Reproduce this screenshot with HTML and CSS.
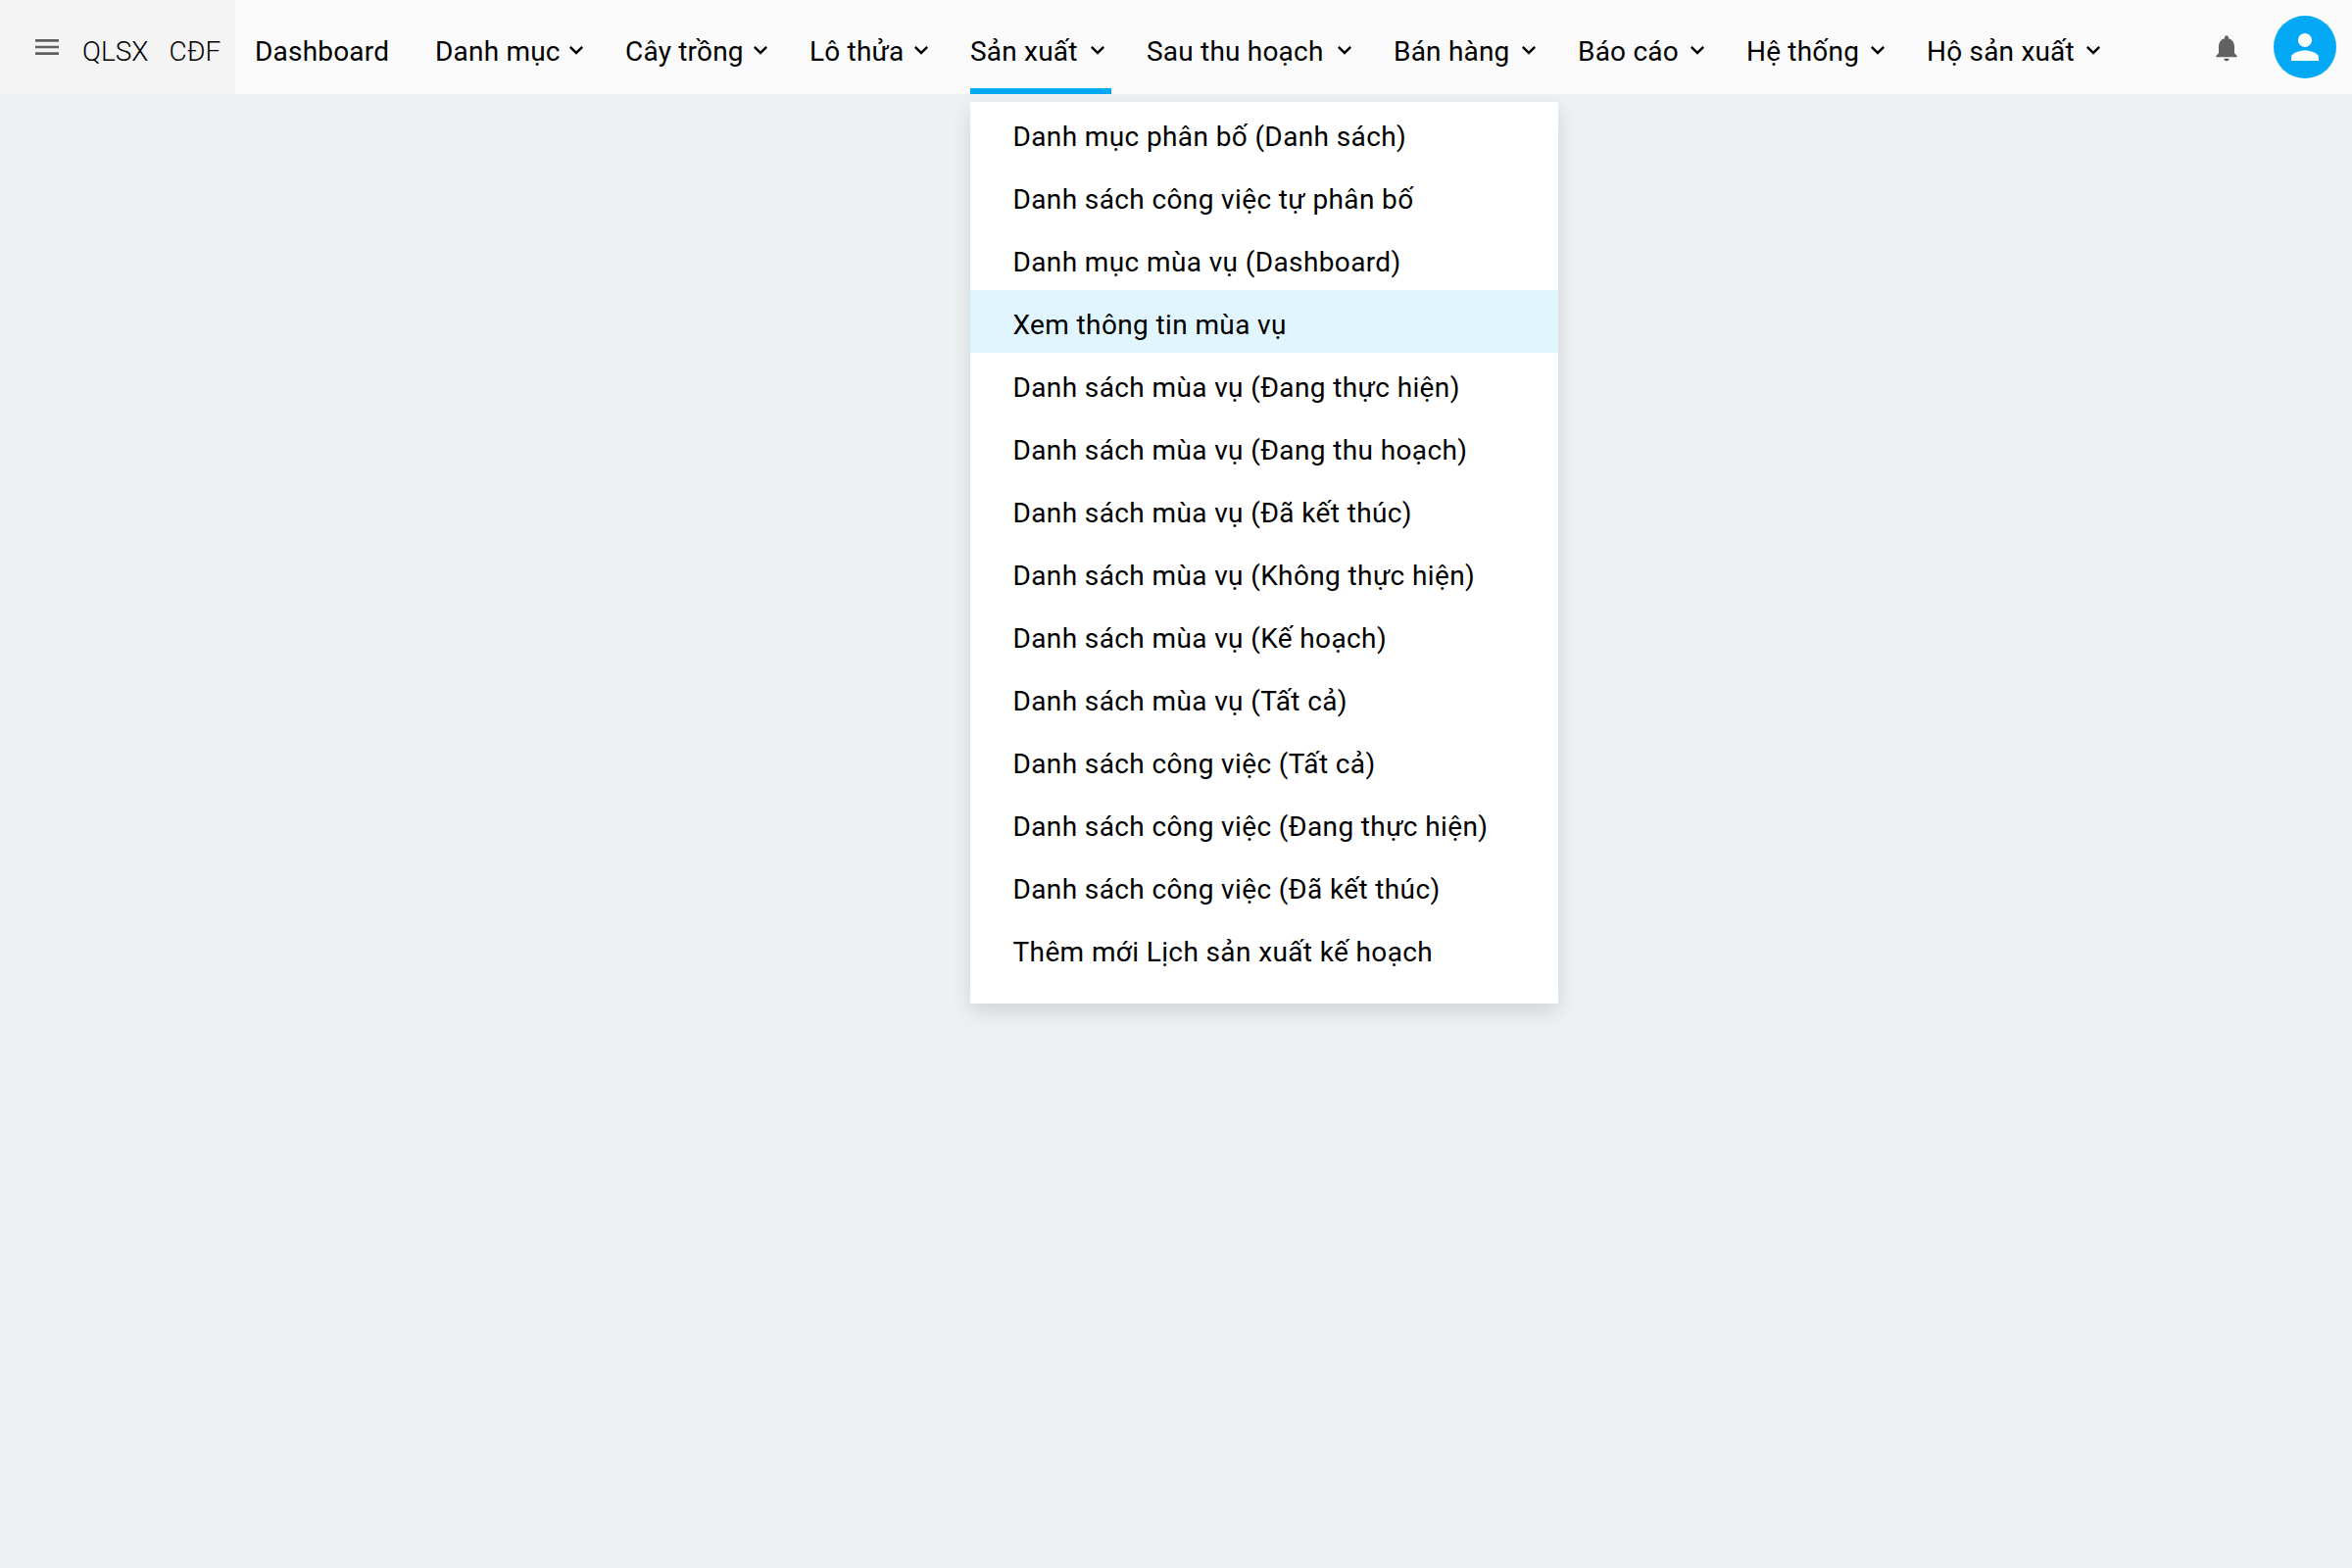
FILE: index.html
```html
<!DOCTYPE html>
<html lang="vi">
<head>
<meta charset="utf-8">
<title>QLSX CĐF</title>
<link rel="stylesheet" href="styles.css">
</head>
<body>
<svg class="sprite" width="0" height="0">
  <symbol id="chevron" viewBox="0 0 24 24"><path d="M7.41 8.59 12 13.17l4.59-4.58L18 10l-6 6-6-6z"/></symbol>
</svg>
<header class="topbar">
  <div class="brand">
    <svg class="menu-icon" viewBox="0 0 24 24"><path d="M3 18h18v-2H3v2zm0-5h18v-2H3v2zm0-7v2h18V6H3z"/></svg>
    <span class="brand-name">QLSX</span>
    <span class="brand-name">CĐF</span>
  </div>
  <nav class="nav">
    <a class="nav-item nav-home">Dashboard</a>
    <a class="nav-item nav-catalog">Danh mục<svg class="chevron"><use href="#chevron"/></svg></a>
    <a class="nav-item nav-crops">Cây trồng<svg class="chevron"><use href="#chevron"/></svg></a>
    <a class="nav-item nav-plots">Lô thửa<svg class="chevron"><use href="#chevron"/></svg></a>
    <div class="nav-item nav-production active">Sản xuất<svg class="chevron"><use href="#chevron"/></svg>
      <ul class="dropdown">
        <li class="option">Danh mục phân bố (Danh sách)</li>
        <li class="option">Danh sách công việc tự phân bố</li>
        <li class="option">Danh mục mùa vụ (Dashboard)</li>
        <li class="option hovered">Xem thông tin mùa vụ</li>
        <li class="option">Danh sách mùa vụ (Đang thực hiện)</li>
        <li class="option">Danh sách mùa vụ (Đang thu hoạch)</li>
        <li class="option">Danh sách mùa vụ (Đã kết thúc)</li>
        <li class="option">Danh sách mùa vụ (Không thực hiện)</li>
        <li class="option">Danh sách mùa vụ (Kế hoạch)</li>
        <li class="option">Danh sách mùa vụ (Tất cả)</li>
        <li class="option">Danh sách công việc (Tất cả)</li>
        <li class="option">Danh sách công việc (Đang thực hiện)</li>
        <li class="option">Danh sách công việc (Đã kết thúc)</li>
        <li class="option">Thêm mới Lịch sản xuất kế hoạch</li>
      </ul>
    </div>
    <a class="nav-item nav-harvest">Sau thu hoạch<svg class="chevron"><use href="#chevron"/></svg></a>
    <a class="nav-item nav-sales">Bán hàng<svg class="chevron"><use href="#chevron"/></svg></a>
    <a class="nav-item nav-reports">Báo cáo<svg class="chevron"><use href="#chevron"/></svg></a>
    <a class="nav-item nav-system">Hệ thống<svg class="chevron"><use href="#chevron"/></svg></a>
    <a class="nav-item nav-farms">Hộ sản xuất<svg class="chevron"><use href="#chevron"/></svg></a>
  </nav>
  <div class="actions">
    <svg class="bell" viewBox="0 0 24 24"><path d="M12 22c1.1 0 2-.9 2-2h-4c0 1.1.89 2 2 2zm6-6v-5c0-3.07-1.64-5.64-4.5-6.32V4c0-.83-.67-1.5-1.5-1.5s-1.5.67-1.5 1.5v.68C7.63 5.36 6 7.92 6 11v5l-2 2v1h16v-1l-2-2z"/></svg>
    <span class="avatar"><svg class="person" viewBox="0 0 24 24"><path d="M12 12c2.21 0 4-1.79 4-4s-1.79-4-4-4-4 1.79-4 4 1.79 4 4 4zm0 2c-2.67 0-8 1.34-8 4v2h16v-2c0-2.66-5.33-4-8-4z"/></svg></span>
  </div>
</header>
</body>
</html>
```
FILE: styles.css
```css
* {
  box-sizing: border-box;
}

body {
  margin: 0;
  min-height: 1600px;
  background: #edf1f4;
  color: #000;
  font-family: Roboto, "Noto Sans", sans-serif;
  font-size: 28px;
}

.sprite {
  display: block;
}

.topbar {
  display: flex;
  height: 96px;
  background: #fafafa;
}

.brand {
  display: flex;
  flex: none;
  align-items: center;
  width: 240px;
  padding-left: 32px;
  background: #f4f4f4;
}

.menu-icon {
  flex: none;
  width: 32px;
  height: 32px;
  margin-right: 20px;
  fill: #616161;
}

.brand-name {
  flex: none;
  padding-top: 9px;
  margin-right: 21px;
  font-weight: 300;
  white-space: nowrap;
}

.nav {
  display: flex;
  flex: none;
  gap: 36px;
  padding-left: 20px;
}

.nav-item {
  position: relative;
  display: flex;
  align-items: center;
  justify-content: space-between;
  padding-top: 9px;
  letter-spacing: 0.2px;
  white-space: nowrap;
}

.nav-home { width: 148px; }
.nav-catalog { width: 158px; }
.nav-crops { width: 152px; }
.nav-plots { width: 128px; }
.nav-production { width: 144px; }
.nav-harvest { width: 216px; }
.nav-sales { width: 152px; }
.nav-reports { width: 136px; }
.nav-system { width: 148px; }
.nav-farms { width: 184px; }

.active {
  box-shadow: inset 0 -6px #03a9f4;
}

.chevron {
  flex: none;
  width: 28px;
  height: 28px;
  margin-top: -3px;
}

.dropdown {
  position: absolute;
  top: 104px;
  left: 0;
  width: 600px;
  height: 920px;
  margin: 0;
  padding: 0 0 24px;
  background: #fff;
  list-style: none;
  box-shadow: 0 8px 20px rgba(0, 0, 0, 0.12);
}

.option {
  height: 64px;
  padding: 4px 43.5px 0;
  line-height: 63px;
  letter-spacing: 0.38px;
}

.hovered {
  background: #e1f5fe;
}

.actions {
  display: flex;
  align-items: center;
  gap: 32px;
  margin-left: auto;
  padding-right: 16px;
}

.bell {
  width: 32px;
  height: 32px;
  margin-top: 1px;
  fill: #616161;
}

.avatar {
  display: grid;
  place-items: center;
  width: 64px;
  height: 64px;
  border-radius: 50%;
  background: #03a9f4;
}

.person {
  width: 42px;
  height: 42px;
  fill: #fff;
}
```
